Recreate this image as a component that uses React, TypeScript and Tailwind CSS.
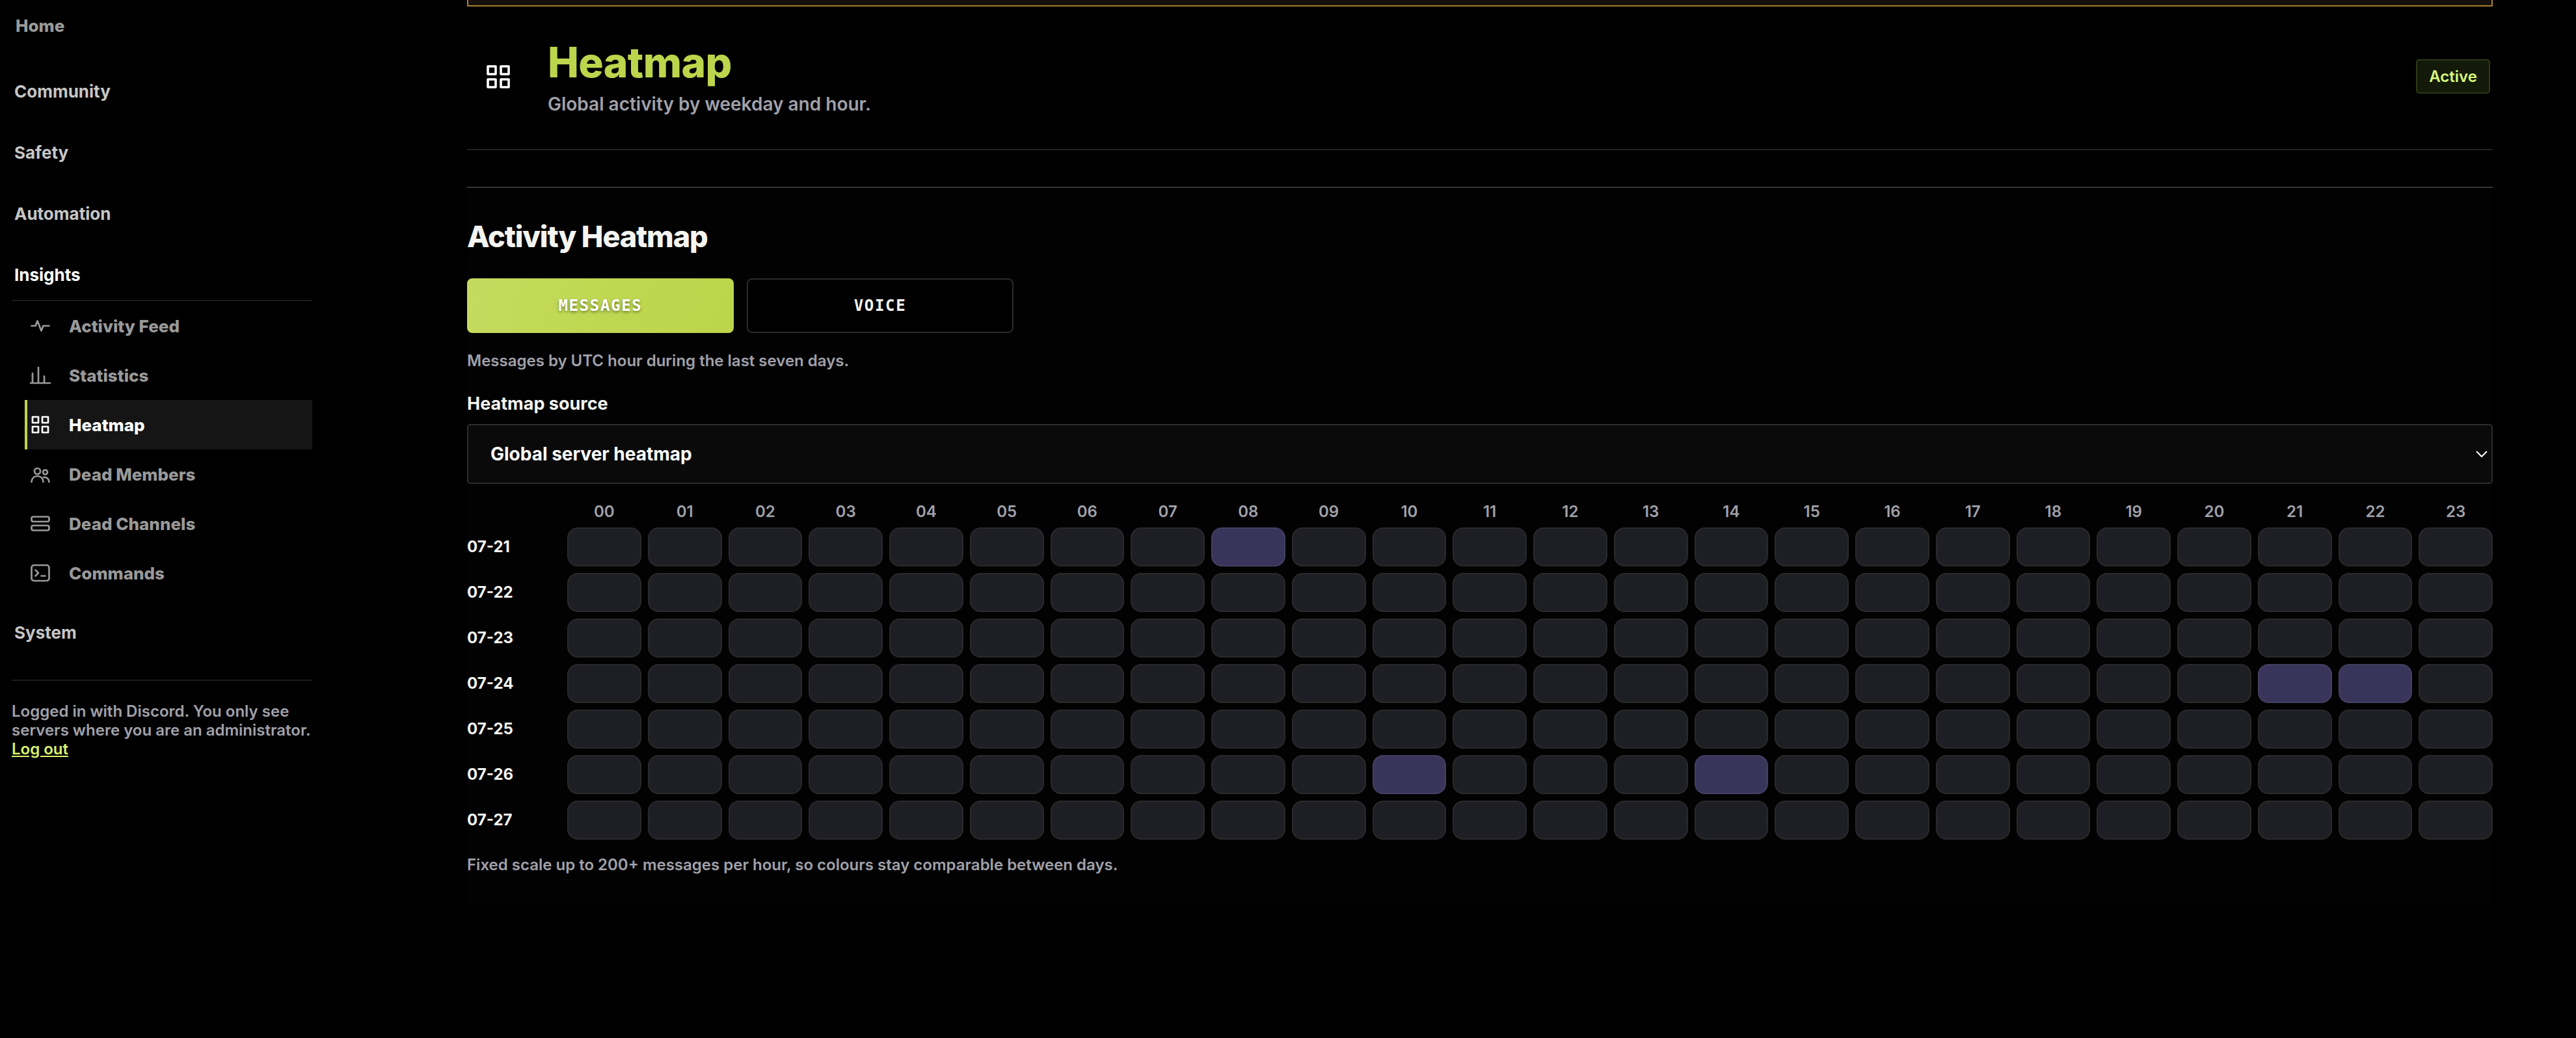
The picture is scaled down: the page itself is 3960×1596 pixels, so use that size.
import type { ReactNode } from "react";

const HOURS = Array.from({ length: 24 }, (_, i) => String(i).padStart(2, "0"));

const DAYS: { label: string; active: number[] }[] = [
  { label: "07-21", active: [8] },
  { label: "07-22", active: [] },
  { label: "07-23", active: [] },
  { label: "07-24", active: [21, 22] },
  { label: "07-25", active: [] },
  { label: "07-26", active: [10, 14] },
  { label: "07-27", active: [] },
];

function Icon({ className, children }: { className: string; children: ReactNode }) {
  return (
    <svg
      viewBox="0 0 24 24"
      fill="none"
      stroke="currentColor"
      strokeWidth={1.8}
      strokeLinecap="round"
      strokeLinejoin="round"
      className={className}
    >
      {children}
    </svg>
  );
}

const gridShape = (
  <>
    <rect x="4" y="4" width="6" height="6" />
    <rect x="14" y="4" width="6" height="6" />
    <rect x="4" y="14" width="6" height="6" />
    <rect x="14" y="14" width="6" height="6" />
  </>
);

const INSIGHTS: { label: string; active?: boolean; shape: ReactNode }[] = [
  { label: "Activity Feed", shape: <path d="M3 12h4l2-5 4 10 2-5h6" /> },
  { label: "Statistics", shape: <path d="M4 20V10M10 20V4M16 20v-7M2 20h20" /> },
  { label: "Heatmap", active: true, shape: gridShape },
  {
    label: "Dead Members",
    shape: (
      <>
        <circle cx="9" cy="9" r="3" />
        <circle cx="17" cy="10" r="2.3" />
        <path d="M3 20c.3-3.6 2.6-6 6-6s5.7 2.4 6 6M15.3 15.3c3.2-.6 5.3 1.3 5.7 4.7" />
      </>
    ),
  },
  {
    label: "Dead Channels",
    shape: (
      <>
        <rect x="3" y="5" width="18" height="5" rx="1.8" />
        <rect x="3" y="14" width="18" height="5" rx="1.8" />
      </>
    ),
  },
  {
    label: "Commands",
    shape: (
      <>
        <rect x="3" y="4" width="18" height="16" rx="2.5" />
        <path d="m7 9 3 3-3 3M13 15h4" />
      </>
    ),
  },
];

function Group({ label, open }: { label: string; open?: boolean }) {
  return (
    <div
      className={
        open
          ? "flex h-[87px] items-start border-b-2 border-[#1b1b1b] pt-[31px] pl-1 text-[26px] leading-[32px] font-bold text-white"
          : "flex h-[94px] items-start pt-[31px] pl-1 text-[26px] leading-[32px] font-bold text-[#c6c6c6]"
      }
    >
      {label}
    </div>
  );
}

function Sidebar() {
  return (
    <aside className="w-[480px] shrink-0 pl-[18px]">
      <div className="h-[94px] pt-6 pl-1.5 text-[26px] leading-[32px] font-extrabold text-[#9a9a9a]">Home</div>
      <Group label="Community" />
      <Group label="Safety" />
      <Group label="Automation" />
      <Group label="Insights" open />
      <nav className="flex flex-col pl-5">
        {INSIGHTS.map((item) => (
          <a
            key={item.label}
            className={
              item.active
                ? "flex h-[76px] items-center border-l-4 border-[#bdd54c] bg-[#151515] pl-0.5 text-white"
                : "flex h-[76px] items-center border-l-4 border-transparent pl-0.5 text-[#999999]"
            }
          >
            <Icon className="size-9">{item.shape}</Icon>
            <span className="ml-[26px] text-[26px] leading-[33px] font-extrabold">{item.label}</span>
          </a>
        ))}
      </nav>
      <div className="flex h-[126px] items-start pt-[38px] pl-1 text-[26px] leading-[32px] font-bold text-[#c6c6c6]">
        System
      </div>
      <p className="border-t-2 border-[#1b1b1b] pt-8 text-[24px] leading-[29px] font-semibold whitespace-nowrap text-[#a1a1aa]">
        Logged in with Discord. You only see
        <br />
        servers where you are an administrator.
        <br />
        <a className="text-[#d9f26b] underline">Log out</a>
      </p>
    </aside>
  );
}

function PageHeader() {
  return (
    <header className="flex h-[221px] items-start border-b-2 border-[#222222]">
      <div className="flex h-[216px] w-24 items-center justify-center text-white">
        <Icon className="size-12">{gridShape}</Icon>
      </div>
      <div className="ml-7 flex-1 pt-[46px]">
        <h1 className="text-[64px] leading-[80px] font-extrabold tracking-[-0.6px] text-[#bdd54c]">Heatmap</h1>
        <p className="mt-[7px] text-[28px] leading-[34px] font-semibold text-[#a1a1aa]">
          Global activity by weekday and hour.
        </p>
      </div>
      <span className="mt-[81px] mr-1 flex h-[53px] w-[114px] items-center justify-center rounded-[5px] border-2 border-[#2f3818] bg-[#141a09] text-[24px] leading-[29px] font-semibold text-[#d9fa7e]">
        Active
      </span>
    </header>
  );
}

function HeatmapGrid() {
  return (
    <div className="grid grid-cols-[144px_repeat(24,minmax(0,1fr))] gap-2.5">
      <span />
      {HOURS.map((h) => (
        <span key={h} className="h-[29px] text-center text-[24px] leading-[29px] font-semibold text-[#a1a1aa]">
          {h}
        </span>
      ))}
      {DAYS.map((day) => (
        <div key={day.label} className="contents">
          <span className="flex h-[60px] items-center pb-px text-[24px] leading-[29px] font-bold text-[#f4f4f0]">
            {day.label}
          </span>
          {HOURS.map((h, i) => (
            <div
              key={h}
              className={
                day.active.includes(i)
                  ? "h-[60px] rounded-2xl border-2 border-[#444062] bg-[#393459]"
                  : "h-[60px] rounded-2xl border-2 border-[#2a2a2d] bg-[#1e1f24]"
              }
            />
          ))}
        </div>
      ))}
    </div>
  );
}

function Panel() {
  return (
    <section className="mt-14 h-[1104px] border-t-2 border-[#353535] bg-[#020202]">
      <h2 className="pt-[48px] text-[45px] leading-[54px] font-extrabold tracking-[-1.15px] text-[#f4f4f0]">
        Activity Heatmap
      </h2>
      <div className="mt-[37px] flex gap-5 font-['DejaVu_Sans_Mono',monospace] text-[24px] leading-[28px] font-bold tracking-[0.07em]">
        <button className="h-[84px] w-[410px] rounded-lg bg-[linear-gradient(105deg,#c5db5f_0%,#c0d852_45%,#bcd54a_100%)] text-white [text-shadow:0_2px_4px_rgb(0_0_0/0.45)]">
          MESSAGES
        </button>
        <button className="h-[84px] w-[410px] rounded-lg border-2 border-[#2a2a2a] bg-black text-[#f4f4f0]">VOICE</button>
      </div>
      <p className="mt-7 text-[24px] leading-[29px] font-semibold text-[#a1a1aa]">
        Messages by UTC hour during the last seven days.
      </p>
      <p className="mt-9 text-[27px] leading-[32px] font-bold text-[#f4f4f0]">Heatmap source</p>
      <div className="mt-[15px] flex h-[92px] items-center justify-between rounded-[5px] border-2 border-[#2d2d2d] bg-[#0a0a0a] pr-[5px] pl-[34px] text-[28px] leading-[34px] font-bold text-white">
        Global server heatmap
        <svg viewBox="0 0 20 12" fill="none" stroke="currentColor" strokeWidth="2" className="h-3 w-5">
          <path d="M2 2l8 8 8-8" />
        </svg>
      </div>
      <div className="pt-7">
        <HeatmapGrid />
      </div>
      <p className="mt-6 text-[24px] leading-[29px] font-semibold text-[#a1a1aa]">
        Fixed scale up to 200+ messages per hour, so colours stay comparable between days.
      </p>
    </section>
  );
}

export default function App() {
  return (
    <div className="flex h-[1596px] w-[3960px] overflow-hidden bg-black font-['Inter',sans-serif]">
      <Sidebar />
      <main className="ml-[238px] w-[3114px] shrink-0">
        <div className="h-2.5 border-x-2 border-b-2 border-[#a68032] bg-[#151009]" />
        <PageHeader />
        <Panel />
      </main>
    </div>
  );
}
